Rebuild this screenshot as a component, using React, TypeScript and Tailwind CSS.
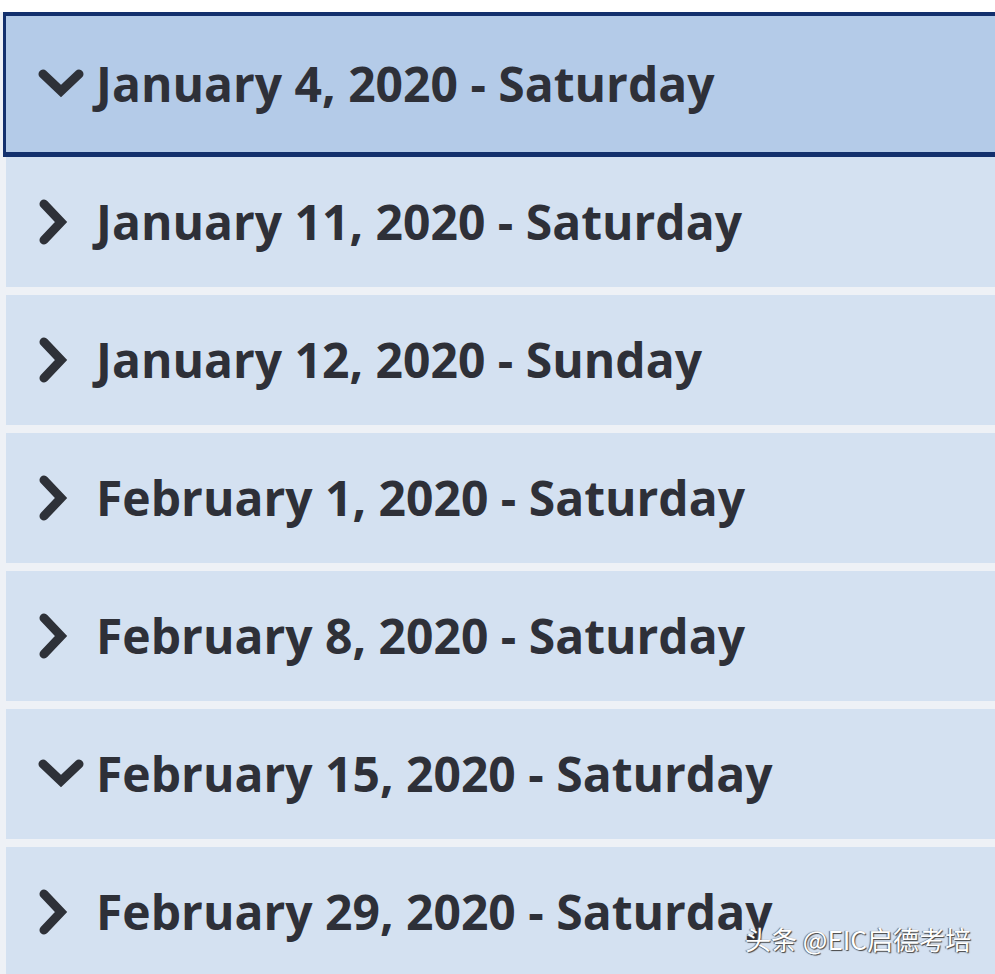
const dates = [
  { label: "January 4, 2020 - Saturday", open: true, focused: true },
  { label: "January 11, 2020 - Saturday" },
  { label: "January 12, 2020 - Sunday" },
  { label: "February 1, 2020 - Saturday" },
  { label: "February 8, 2020 - Saturday" },
  { label: "February 15, 2020 - Saturday", open: true },
  { label: "February 29, 2020 - Saturday" },
];

function Chevron({ open }: { open?: boolean }) {
  return (
    <svg width="46" height="46" viewBox="0 0 46 46" className="shrink-0">
      {open ? (
        <path d="M5 13 L23 30 L41 13" fill="none" stroke="#2e3138" strokeWidth="9" strokeLinecap="round" strokeLinejoin="miter" />
      ) : (
        <path d="M6 5 L23 23 L6 41" fill="none" stroke="#2e3138" strokeWidth="9" strokeLinecap="round" strokeLinejoin="miter" />
      )}
    </svg>
  );
}

export default function App() {
  return (
    <main
      className="relative w-[995px] h-[974px] overflow-hidden bg-[#eef1f6] flex flex-col"
      style={{ fontFamily: '"Open Sans", "Noto Sans", sans-serif' }}
    >
      <div className="h-[12px] shrink-0 bg-white" />
      <div className="flex flex-col gap-[8px]">
        {dates.map((d) => (
          <button
            key={d.label}
            className={
              d.focused
                ? "ml-[3px] -mb-[8px] h-[145px] shrink-0 flex items-center gap-[12px] pl-[32px] bg-[#b4cbe8] border-l-[3px] border-t-[4px] border-b-[5px] border-[#13306d] text-left"
                : "ml-[6px] h-[130px] shrink-0 flex items-center gap-[12px] pl-[32px] bg-[#d4e1f1] text-left first-of-type:h-[128px]"
            }
          >
            <Chevron open={d.open} />
            <span className="text-[48px] font-bold text-[#2e3038] leading-none">{d.label}</span>
          </button>
        ))}
      </div>
      <div
        className="absolute left-[745px] top-[919px] text-[26px] text-white"
        style={{ fontFamily: '"Noto Sans CJK SC", sans-serif', textShadow: "1px 1px 1px #444, -1px 0 1px #666" }}
      >
        头条 @EIC启德考培
      </div>
    </main>
  );
}
